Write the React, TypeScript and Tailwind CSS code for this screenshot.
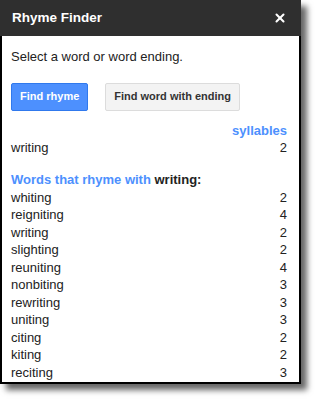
import { X } from "lucide-react";

const RHYMES: [string, number][] = [
  ["whiting", 2],
  ["reigniting", 4],
  ["writing", 2],
  ["slighting", 2],
  ["reuniting", 4],
  ["nonbiting", 3],
  ["rewriting", 3],
  ["uniting", 3],
  ["citing", 2],
  ["kiting", 2],
  ["reciting", 3],
];

export default function App() {
  return (
    <div
      className="h-[403px] w-[315px] overflow-hidden bg-white"
      style={{ fontFamily: '"Liberation Sans", Arial, sans-serif' }}
    >
      <div className="w-[301px] border-2 border-t-0 border-black bg-white shadow-[6px_6px_6px_rgba(0,0,0,0.6)]">
        {/* Header */}
        <div className="-mx-[2px] flex h-[36px] items-center justify-between bg-[#2f2f2f] pl-[12px] pr-[14px]">
          <span className="text-[13.5px] font-bold text-white">Rhyme Finder</span>
          <X className="h-[14px] w-[14px] text-white" strokeWidth={3.5} />
        </div>

        {/* Body */}
        <div className="pb-[1px] pl-[9px] pr-[10px] pt-[12px] text-[13px] leading-[17.5px] text-[#222]">
          <p>Select a word or word ending.</p>

          <div className="mt-[17px] flex gap-[17px]">
            <button className="h-[28px] rounded-[2px] border border-[#3079ed] bg-[#4d90fe] px-[8px] text-[11px] font-bold text-white">
              Find rhyme
            </button>
            <button className="h-[28px] rounded-[2px] border border-[#dcdcdc] bg-[#f3f3f3] px-[8px] text-[11px] font-bold text-[#333]">
              Find word with ending
            </button>
          </div>

          <div className="mt-[11px] pr-[2px]">
            <p className="text-right font-bold text-[#4d90fe]">syllables</p>
            <div className="flex justify-between">
              <span>writing</span>
              <span>2</span>
            </div>

            <p className="mt-[14.5px] font-bold text-[#4d90fe]">
              Words that rhyme with <span className="text-[#222]">writing:</span>
            </p>
            {RHYMES.map(([word, n]) => (
              <div key={word} className="flex justify-between">
                <span>{word}</span>
                <span>{n}</span>
              </div>
            ))}
          </div>
        </div>
      </div>
    </div>
  );
}
